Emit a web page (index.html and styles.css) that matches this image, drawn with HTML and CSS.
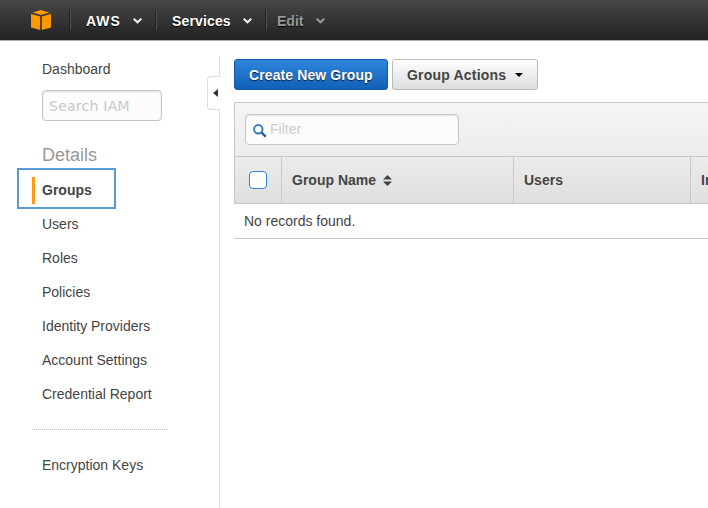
FILE: index.html
```html
<!DOCTYPE html>
<html lang="en">
<head>
<meta charset="utf-8">
<title>IAM Groups</title>
<link rel="stylesheet" href="styles.css">
</head>
<body>
<header class="topbar">
  <svg class="logo" width="20" height="20" viewBox="0 0 20 20" fill="#ff9900"><path d="M10 0L18.500 2.500L10 5L1.500 2.500Z"/><path d="M0 4L9.200 6.400V20L0 17.500Z"/><path d="M20 4L10.800 6.400V20L20 17.500Z"/></svg>
  <div class="menu menu-aws"><span>AWS</span><svg class="chev" width="9" height="6" viewBox="0 0 9 6"><path d="M.7 .7L4.500 4.300L8.300 .7"/></svg></div>
  <div class="menu menu-services"><span>Services</span><svg class="chev" width="9" height="6" viewBox="0 0 9 6"><path d="M.7 .7L4.500 4.300L8.300 .7"/></svg></div>
  <div class="menu menu-edit"><span>Edit</span><svg class="chev" width="9" height="6" viewBox="0 0 9 6"><path d="M.7 .7L4.500 4.300L8.300 .7"/></svg></div>
</header>
<div class="layout">
  <aside class="sidebar">
    <a class="item">Dashboard</a>
    <div class="search">Search IAM</div>
    <h2>Details</h2>
    <div class="selected"><b>Groups</b></div>
    <nav>
      <a class="item">Users</a>
      <a class="item">Roles</a>
      <a class="item">Policies</a>
      <a class="item">Identity Providers</a>
      <a class="item">Account Settings</a>
      <a class="item">Credential Report</a>
    </nav>
    <div class="divider"></div>
    <a class="item">Encryption Keys</a>
    <div class="collapse"><svg width="5" height="8" viewBox="0 0 5 8"><path d="M5 0V8L0 4Z" fill="#333"/></svg></div>
  </aside>
  <main>
    <div class="actions">
      <div class="btn primary">Create New Group</div>
      <div class="btn secondary">Group Actions<svg width="8" height="4" viewBox="0 0 8 4"><path d="M0 0H8L4 4Z"/></svg></div>
    </div>
    <section class="table">
      <div class="toolbar">
        <div class="filter"><svg width="14" height="14" viewBox="0 0 14 14" fill="none"><circle cx="5.300" cy="5.300" r="4.200" stroke="#3c7fb8" stroke-width="2"/><path d="M8.500 8.500L12.700 12.700" stroke="#34569b" stroke-width="2.400"/></svg><span>Filter</span></div>
      </div>
      <div class="row head">
        <div class="cell"><span class="check"></span></div>
        <div class="cell">Group Name<svg width="9" height="11" viewBox="0 0 9 11"><path d="M4.500 0L9 4.500H0ZM0 6.500H9L4.500 11Z" fill="#444"/></svg></div>
        <div class="cell">Users</div>
        <div class="cell">In</div>
      </div>
      <div class="empty">No records found.</div>
    </section>
  </main>
</div>
</body>
</html>
```
FILE: styles.css
```css
* { box-sizing: border-box; }
body {
  margin: 0;
  height: 508px;
  overflow: hidden;
  background: #fff;
  color: #444;
  font: 14px/20px "Liberation Sans", Arial, sans-serif;
}
svg { display: block; flex: none; }
.topbar {
  display: flex;
  align-items: center;
  height: 41px;
  padding: 0 0 1px 31px;
  background: linear-gradient(#464646, #222);
  border-bottom: 1px solid #aaa;
}
.logo { margin-right: 18px; }
.menu {
  display: flex;
  align-items: center;
  height: 20px;
  padding: 2px 0 0 15px;
  border-left: 1px solid #202020;
  box-shadow: inset 1px 0 #505050;
  color: #fff;
  font-weight: bold;
  text-shadow: 0 1px 1px #000;
}
.chev { fill: none; stroke: #eee; stroke-width: 2; }
.menu-aws { width: 86px; padding-left: 16px; letter-spacing: 1px; }
.menu-aws .chev { margin-left: 12px; }
.menu-services { width: 110px; padding-left: 16px; letter-spacing: .15px; }
.menu-services .chev { margin-left: 12px; }
.menu-edit { padding-left: 11px; color: #999; }
.menu-edit .chev { margin-left: 13px; stroke: #999; }
.layout { display: flex; height: 467px; }
.sidebar {
  position: relative;
  width: 220px;
  margin-top: 15px;
  border-right: 1px solid #ddd;
}
.item { display: block; height: 34px; margin-left: 42px; line-height: 34px; }
.sidebar > .item:first-child { height: 26px; line-height: 26px; }
.search {
  width: 120px;
  height: 31px;
  margin: 8px 0 0 42px;
  padding-left: 6px;
  border: 1px solid #c5c5c5;
  border-radius: 4px;
  background: #fcfcfc;
  box-shadow: inset 0 1px 2px #ddd;
  color: #c8c8c8;
  font: 14px/30px "DejaVu Sans", sans-serif;
  letter-spacing: .25px;
}
h2 { margin: 22px 0 0 42px; color: #999; font-size: 18px; font-weight: normal; line-height: 24px; }
.selected {
  width: 99px;
  height: 41px;
  margin: 1px 0 -2px 17px;
  padding: 7px 0 0 13px;
  border: 2px solid #5b9bd5;
}
.selected b { display: block; height: 27px; padding-left: 7px; border-left: 3px solid #ff9912; line-height: 27px; }
.divider { width: 135px; margin: 18px 0 18px 32px; border-top: 1px dotted #bbb; }
.collapse {
  position: absolute;
  top: 20px;
  right: -1px;
  display: flex;
  align-items: center;
  width: 13px;
  height: 34px;
  padding-left: 5px;
  border: 1px solid #ddd;
  border-right: 0;
  border-radius: 4px 0 0 4px;
  background: #fff;
}
main { flex: 1; min-width: 0; padding: 18px 0 0 14px; }
.actions { display: flex; gap: 4px; }
.btn {
  display: flex;
  align-items: center;
  height: 31px;
  padding: 0 14px;
  border: 1px solid #bbb;
  border-radius: 3px;
  font-weight: bold;
  letter-spacing: .1px;
  white-space: nowrap;
}
.primary { width: 154px; border-color: #1059ae; background: linear-gradient(#2f85dc, #1061b7); color: #fff; text-shadow: 0 1px 1px #023; }
.secondary { width: 146px; background: linear-gradient(#fff, #ddd); letter-spacing: .2px; }
.secondary svg { margin-left: 9px; }
.table { margin-top: 12px; }
.toolbar {
  height: 54px;
  padding: 11px 0 0 10px;
  border: solid #c8c8c8;
  border-width: 1px 0 0 1px;
  background: linear-gradient(#f5f5f5, #ececec);
}
.filter {
  display: flex;
  align-items: center;
  width: 214px;
  height: 31px;
  padding-left: 7px;
  border: 1px solid #c8c8c8;
  border-radius: 4px;
  background: #fcfcfc;
  box-shadow: inset 0 1px 2px #e2e2e2;
  color: #ccc;
}
.filter svg { margin: 3px 3px 0 0; }
.filter span { margin-top: -1px; }
.row {
  display: grid;
  grid-template-columns: 47px 232px 177px minmax(0, 1fr);
  height: 48px;
  border-top: 1px solid #c8c8c8;
  border-bottom: 1px solid #c8c8c8;
  background: linear-gradient(#ececec, #dfdfdf);
  font-weight: bold;
}
.cell { display: flex; align-items: center; padding-left: 10px; border-left: 1px solid #c8c8c8; overflow: hidden; white-space: nowrap; }
.cell:first-child { padding-left: 14px; }
.cell svg { margin-left: 7px; }
.check { width: 18px; height: 18px; border: 1px solid #2f85dc; border-radius: 4px; background: #fff; }
.empty { height: 35px; padding-left: 10px; border-bottom: 1px solid #c8c8c8; line-height: 34px; }
```
